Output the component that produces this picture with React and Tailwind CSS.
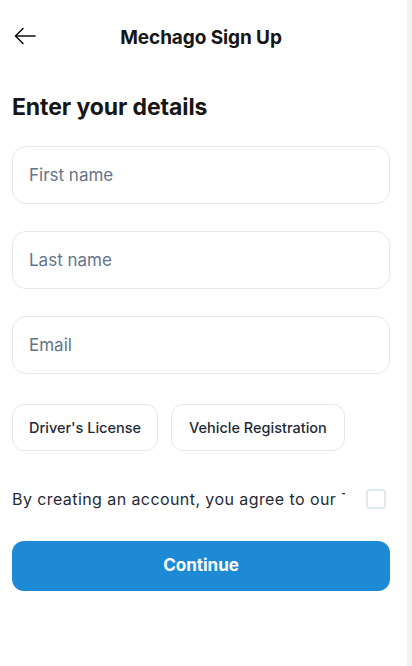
import React, { useState } from "react";

const fieldClass =
  "h-[58px] w-full rounded-[14px] border border-[#e2e8f0] bg-white px-4 text-[17px] text-[#1e293b] placeholder:text-[#64748b] focus:outline-none";

function BackArrow() {
  return (
    <svg width="22" height="18" viewBox="0 0 22 18" fill="none" stroke="#111" strokeWidth="1.6" strokeLinecap="round" strokeLinejoin="round">
      <path d="M21 9H2" />
      <path d="M9 1.5L1.5 9L9 16.5" />
    </svg>
  );
}

export default function App() {
  const [agreed, setAgreed] = useState(false);

  return (
    <div className="flex h-[666px] w-[412px] bg-white font-['Inter',sans-serif] text-[#161616]">
      <div className="flex flex-1 flex-col pl-3 pr-[17px]">
        {/* header */}
        <div className="relative flex h-[76px] items-center justify-center">
          <button className="absolute left-[2px] top-[27px]">
            <BackArrow />
          </button>
          <h1 className="pt-[1px] text-[19px] font-bold tracking-[-0.1px]">Mechago Sign Up</h1>
        </div>

        <h2 className="mt-[17px] text-[23px] font-bold leading-[28px] tracking-[-0.1px]">Enter your details</h2>

        <div className="mt-[25px] flex flex-col gap-[27px]">
          <input className={fieldClass} placeholder="First name" />
          <input className={fieldClass} placeholder="Last name" />
          <input className={fieldClass} placeholder="Email" />
        </div>

        <div className="mt-[30px] flex gap-[13px]">
          <button className="h-[47px] rounded-[12px] border border-[#e2e8f0] px-[16px] text-[14.5px] font-medium text-[#1f2937]">
            Driver's License
          </button>
          <button className="h-[47px] rounded-[12px] border border-[#e2e8f0] px-[17px] text-[14.5px] font-medium text-[#1f2937]">
            Vehicle Registration
          </button>
        </div>

        <div className="mt-[36px] flex items-center">
          <p className="w-[333px] overflow-hidden whitespace-nowrap text-[16px] tracking-[0.42px] text-[#1f2937]">
            By creating an account, you agree to our Terms of Service
          </p>
          <button
            onClick={() => setAgreed(!agreed)}
            className="ml-auto mr-[4px] h-5 w-5 rounded-[4px] border-2 border-[#e2e8f0] bg-white"
          />
        </div>

        <button className="mt-[30px] h-[50px] w-full rounded-[12px] bg-[#1e8ad6] text-[17px] font-bold text-white">
          Continue
        </button>
      </div>
      <div className="w-[5px] bg-[#f1f2f4]" />
    </div>
  );
}
